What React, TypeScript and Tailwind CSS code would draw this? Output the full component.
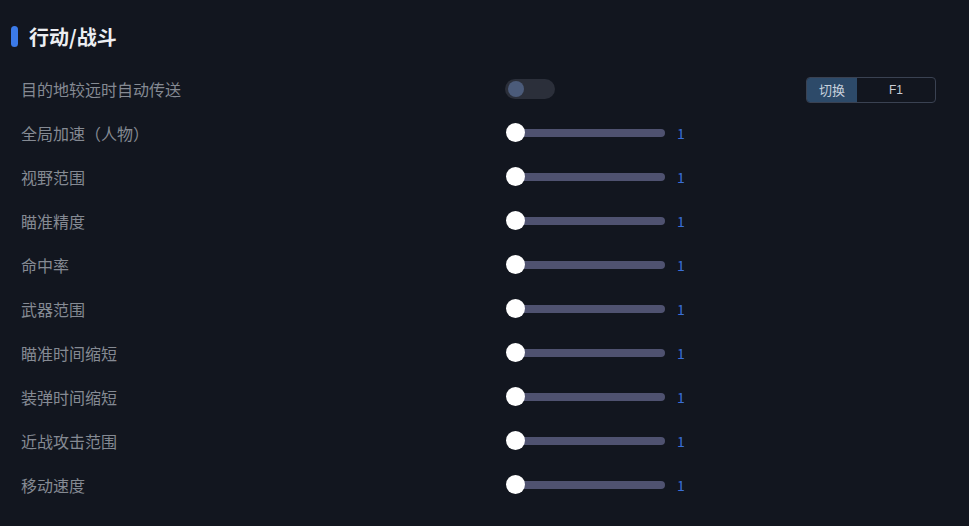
import React from "react";

const sliders = [
  "全局加速（人物）",
  "视野范围",
  "瞄准精度",
  "命中率",
  "武器范围",
  "瞄准时间缩短",
  "装弹时间缩短",
  "近战攻击范围",
  "移动速度",
];

const font = { fontFamily: '"Noto Sans CJK SC", "Noto Sans", sans-serif' };

function Slider() {
  return (
    <div className="flex items-center">
      <div className="relative w-[160px] h-[20px] flex items-center">
        <div className="absolute left-[9px] right-0 h-[8px] rounded-full bg-[#4f5270]" />
        <div className="absolute left-[1px] top-[0px] w-[19px] h-[19px] rounded-full bg-white" />
      </div>
      <span className="ml-[12px] text-[14px] text-[#3a6fd6] leading-none">1</span>
    </div>
  );
}

export default function App() {
  return (
    <div className="min-h-screen w-full bg-[#12161f]" style={font}>
      <div className="pt-[25px] pl-[11px] flex items-center h-[48px]">
        <div className="w-[7px] h-[21px] rounded-full bg-[#3b7ae8]" />
        <div className="ml-[11px] text-[20px] font-bold text-[#eceef2] leading-none">行动/战斗</div>
      </div>
      <div className="mt-[19px]">
        <div className="h-[44px] flex items-center">
          <div className="w-[505px] pl-[21px] text-[16px] text-[#858a93]">目的地较远时自动传送</div>
          <div className="w-[50px] h-[20px] rounded-full bg-[#2b2f3a] flex items-center pl-[3px]">
            <div className="w-[16px] h-[16px] rounded-full bg-[#4b5b7a]" />
          </div>
          <div className="ml-auto mr-[33px] mt-[1px] flex h-[26px] w-[130px] rounded-[4px] border border-[#3a4252] overflow-hidden">
            <div className="w-[50px] bg-[#2d4a69] text-[#c7d0dc] text-[13px] flex items-center justify-center">切换</div>
            <div className="flex-1 text-[#c8ccd4] text-[12px] flex items-center justify-center" style={{ fontFamily: '"Liberation Sans", sans-serif' }}>F1</div>
          </div>
        </div>
        {sliders.map((s) => (
          <div key={s} className="h-[44px] flex items-center">
            <div className="w-[505px] pl-[21px] text-[16px] text-[#858a93]">{s}</div>
            <Slider />
          </div>
        ))}
      </div>
    </div>
  );
}
